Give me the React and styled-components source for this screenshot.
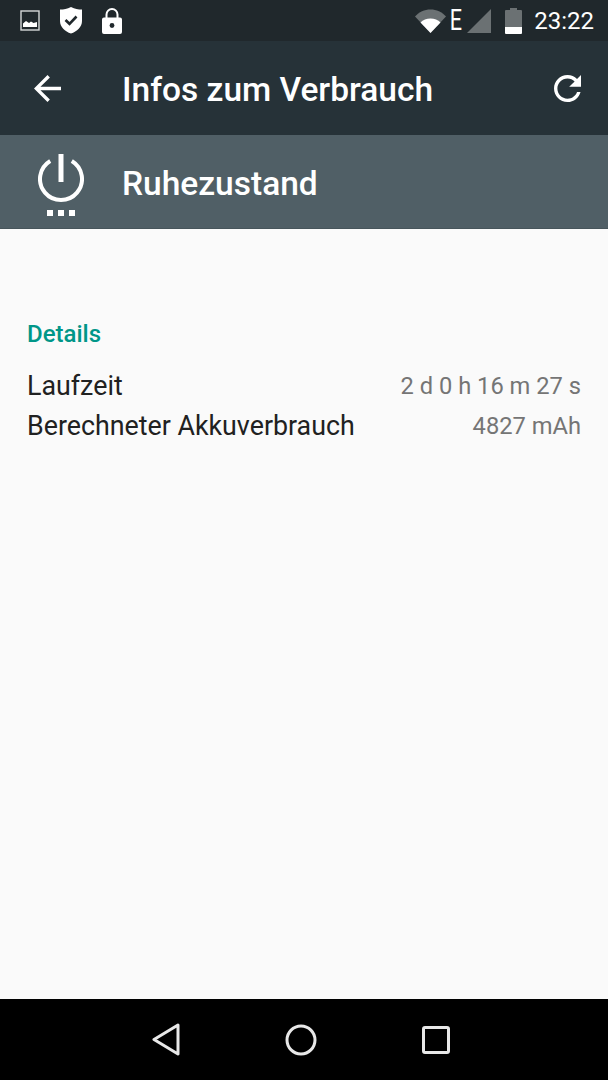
import React from "react";
import styled, { createGlobalStyle } from "styled-components";

const GlobalStyle = createGlobalStyle`
  html, body {
    margin: 0;
    padding: 0;
    background: #fafafa;
  }
  #root {
    height: 1080px;
  }
`;

const Screen = styled.div`
  width: 608px;
  height: 1080px;
  display: flex;
  flex-direction: column;
  overflow: hidden;
  background: #fafafa;
  font-family: Roboto, "Liberation Sans", sans-serif;
`;

const StatusBar = styled.div`
  height: 41px;
  flex: none;
  display: flex;
  align-items: center;
  justify-content: space-between;
  padding: 0 14px 0 20px;
  background: #20282c;
  color: #fff;
`;

const StatusGroup = styled.div`
  display: flex;
  align-items: center;
  gap: ${(p) => p.$gap}px;
`;

const NetworkLetter = styled.span`
  font-size: 30px;
  font-weight: 400;
  line-height: 28px;
  width: 12px;
  margin: -2px -1px 0 -2px;
  display: flex;
  justify-content: center;
  transform: scaleX(0.72);
`;

const BatterySlot = styled.div`
  display: flex;
  margin-left: 8px;
`;

const Clock = styled.span`
  font-size: 24px;
  line-height: 28px;
  margin-left: 6px;
`;

const Toolbar = styled.div`
  height: 94px;
  flex: none;
  display: flex;
  align-items: center;
  background: #263238;
  color: #fff;
  padding: 0 27px 0 34px;
`;

const LeadSlot = styled.div`
  width: 88px;
  flex: none;
  display: flex;
  align-items: center;
`;

const Title = styled.div`
  flex: 1;
  font-size: 33.5px;
  font-weight: 500;
  line-height: 40px;
  padding-top: 3px;
  white-space: nowrap;
`;

const SubHeader = styled.div`
  height: 94px;
  flex: none;
  display: flex;
  align-items: center;
  box-sizing: border-box;
  padding-left: 38px;
  background: #505f66;
  border-bottom: 1px solid #47555b;
  color: #fff;
`;

const SubIconSlot = styled.div`
  width: 84px;
  flex: none;
  display: flex;
  align-items: center;
  margin-top: 7px;
`;

const SubTitle = styled.div`
  font-size: 33.5px;
  font-weight: 500;
  line-height: 40px;
  padding-top: 4px;
`;

const Content = styled.div`
  flex: 1;
  display: flex;
  flex-direction: column;
  padding: 91px 27px 0 27px;
`;

const SectionLabel = styled.div`
  font-size: 24px;
  font-weight: 500;
  line-height: 28px;
  color: #009688;
  margin-bottom: 18px;
`;

const Row = styled.div`
  height: 40px;
  display: flex;
  align-items: center;
  justify-content: space-between;
`;

const RowLabel = styled.span`
  font-size: 26.8px;
  color: #212121;
`;

const RowValue = styled.span`
  font-size: 23.7px;
  color: #757575;
`;

const NavBar = styled.div`
  height: 81px;
  flex: none;
  display: flex;
  align-items: center;
  justify-content: center;
  gap: 105px;
  padding-right: 6px;
  background: #000;
`;

const ImageIcon = () => (
  <svg width="20" height="21" viewBox="0 0 20 21">
    <rect x="1" y="1" width="18" height="19" fill="none" stroke="#d5d7d8" strokeWidth="1.4" />
    <path d="M3 17v-3.500l3-2.500 3 2 2-1.500 2.500 1.500 3.500-1V17z" fill="#fff" />
  </svg>
);

const ShieldIcon = () => (
  <svg width="24" height="27" viewBox="0 0 24 27">
    <path d="M1 2.500C5 2.500 8 2 12 0c4 2 7 2.500 11 2.500V14c0 6-5 10.500-11 12.500C6 24.500 1 20 1 14z" fill="#fff" />
    <path d="M6.500 13l4 3.800 7-7.300" fill="none" stroke="#20282c" strokeWidth="2.600" />
  </svg>
);

const LockIcon = () => (
  <svg width="20" height="26" viewBox="0 0 20 26">
    <path d="M2 9.500h16a2 2 0 0 1 2 2V24a2 2 0 0 1-2 2H2a2 2 0 0 1-2-2V11.500a2 2 0 0 1 2-2z" fill="#fff" />
    <path d="M4.500 10V6.500a5.500 5.500 0 0 1 11 0V10" fill="none" stroke="#fff" strokeWidth="2" />
    <circle cx="10" cy="17.500" r="2.400" fill="#20282c" />
  </svg>
);

const WifiIcon = () => (
  <svg width="31" height="24" viewBox="0 0 31 24">
    <path d="M0 7.500C4 3 9.500 0.500 15.500 0.500S27 3 31 7.500L15.500 24z" fill="#6b7173" />
    <path d="M5.500 13.500C8 11 11.500 9.500 15.500 9.500s7.500 1.500 10 4L15.500 24z" fill="#fff" />
  </svg>
);

const SignalIcon = () => (
  <svg width="24" height="24" viewBox="0 0 24 24">
    <path d="M0 24L24 0v24z" fill="#6b7173" />
  </svg>
);

const BatteryIcon = () => (
  <svg width="17" height="26" viewBox="0 0 17 26">
    <path d="M5 0h7v2h4a1 1 0 0 1 1 1v16H0V3a1 1 0 0 1 1-1h4z" fill="#6b7173" />
    <path d="M0 19h17v6a1 1 0 0 1-1 1H1a1 1 0 0 1-1-1z" fill="#fff" />
  </svg>
);

const BackIcon = () => (
  <svg width="27" height="27" viewBox="4 4 16 16">
    <path d="M20 11H7.830l5.590-5.590L12 4l-8 8 8 8 1.410-1.410L7.830 13H20v-2z" fill="#fff" />
  </svg>
);

const RefreshIcon = () => (
  <svg width="27" height="27" viewBox="4 4 16 16">
    <path
      d="M17.650 6.350C16.200 4.900 14.210 4 12 4c-4.420 0-7.990 3.580-7.990 8s3.570 8 7.990 8c3.730 0 6.840-2.550 7.730-6h-2.080c-.82 2.330-3.040 4-5.650 4-3.310 0-6-2.690-6-6s2.690-6 6-6c1.660 0 3.140.69 4.220 1.780L13 11h7V4l-2.350 2.350z"
      fill="#fff"
    />
  </svg>
);

const PowerIcon = () => (
  <svg width="46" height="62" viewBox="0 0 46 62">
    <path d="M12.200 7a21 21 0 1 0 21.600 0" fill="none" stroke="#fff" strokeWidth="4" />
    <path d="M23 0v28" stroke="#fff" strokeWidth="5" />
    <rect x="9" y="56" width="6" height="6" fill="#fff" />
    <rect x="20" y="56" width="6" height="6" fill="#fff" />
    <rect x="31" y="56" width="6" height="6" fill="#fff" />
  </svg>
);

const NavBack = () => (
  <svg width="28" height="34" viewBox="0 0 28 34">
    <path d="M26 2L2 16.500 26 31z" fill="none" stroke="#e8e8e8" strokeWidth="3" strokeLinejoin="round" />
  </svg>
);

const NavHome = () => (
  <svg width="32" height="32" viewBox="0 0 32 32">
    <circle cx="16" cy="16" r="14" fill="none" stroke="#e8e8e8" strokeWidth="3" />
  </svg>
);

const NavRecent = () => (
  <svg width="28" height="28" viewBox="0 0 28 28">
    <rect x="1.500" y="1.500" width="25" height="25" rx="1.500" fill="none" stroke="#e8e8e8" strokeWidth="3" />
  </svg>
);

const details = [
  { label: "Laufzeit", value: "2 d 0 h 16 m 27 s" },
  { label: "Berechneter Akkuverbrauch", value: "4827 mAh" },
];

export default function App() {
  return (
    <>
      <GlobalStyle />
      <Screen>
        <StatusBar>
          <StatusGroup $gap={19}>
            <ImageIcon />
            <ShieldIcon />
            <LockIcon />
          </StatusGroup>
          <StatusGroup $gap={6}>
            <WifiIcon />
            <NetworkLetter>E</NetworkLetter>
            <SignalIcon />
            <BatterySlot>
              <BatteryIcon />
            </BatterySlot>
            <Clock>23:22</Clock>
          </StatusGroup>
        </StatusBar>
        <Toolbar>
          <LeadSlot>
            <BackIcon />
          </LeadSlot>
          <Title>Infos zum Verbrauch</Title>
          <RefreshIcon />
        </Toolbar>
        <SubHeader>
          <SubIconSlot>
            <PowerIcon />
          </SubIconSlot>
          <SubTitle>Ruhezustand</SubTitle>
        </SubHeader>
        <Content>
          <SectionLabel>Details</SectionLabel>
          {details.map((d) => (
            <Row key={d.label}>
              <RowLabel>{d.label}</RowLabel>
              <RowValue>{d.value}</RowValue>
            </Row>
          ))}
        </Content>
        <NavBar>
          <NavBack />
          <NavHome />
          <NavRecent />
        </NavBar>
      </Screen>
    </>
  );
}
